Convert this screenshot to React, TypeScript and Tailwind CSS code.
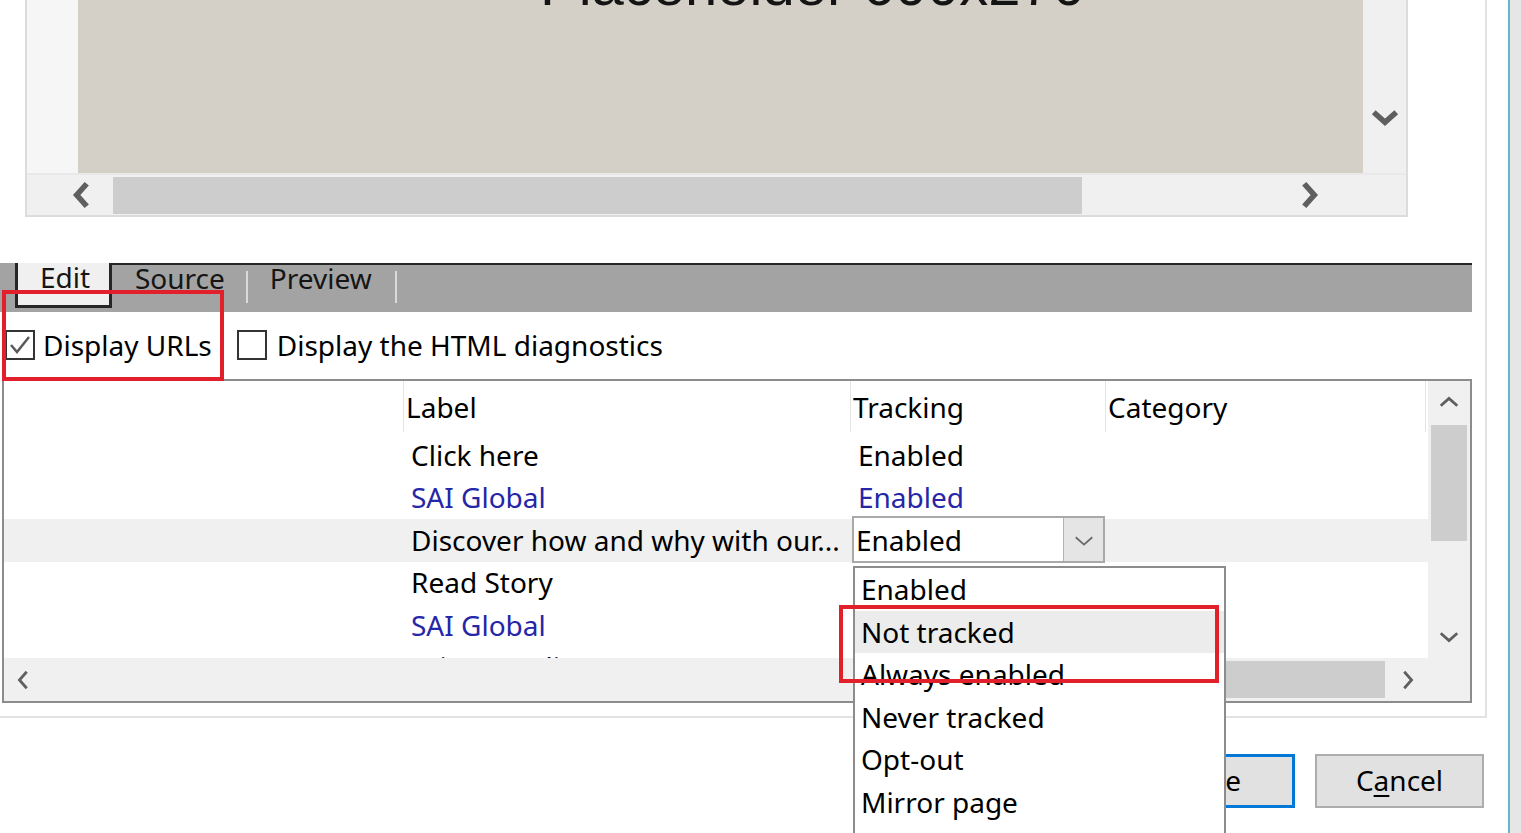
import React from "react";

type Dir = "left" | "right" | "up" | "down";

const chevronPoints: Record<Dir, string> = {
  left: "15,3 7,12 15,21",
  right: "9,3 17,12 9,21",
  up: "3,15 12,7 21,15",
  down: "3,9 12,17 21,9",
};

function Chevron({ dir, size = 20, stroke = 3, color = "#5f5f5f" }: { dir: Dir; size?: number; stroke?: number; color?: string }) {
  return (
    <svg width={size} height={size} viewBox="0 0 24 24" fill="none" stroke={color} strokeWidth={stroke} strokeLinecap="butt" strokeLinejoin="miter">
      <polyline points={chevronPoints[dir]} />
    </svg>
  );
}

function PreviewPane() {
  return (
    <div className="ml-[25px] flex h-[217px] w-[1383px] flex-col border-x-2 border-b-2 border-[#dcdcdc]">
      <div className="flex h-[173px]">
        <div className="w-[51px] bg-[#f6f6f6]" />
        <div className="w-[1285px] overflow-hidden bg-[#d4d0c8]">
          <div className="-mt-[44px] whitespace-nowrap pl-[462px] font-['Liberation_Sans',Arial,sans-serif] text-[58px] leading-none text-[#141414]">
            Placeholder 600x270
          </div>
        </div>
        <div className="flex flex-1 flex-col items-center justify-end bg-[#f0f0f0] pb-[42px]">
          <Chevron dir="down" size={30} stroke={4.5} />
        </div>
      </div>
      <div className="h-[2px] bg-[#e9e9e9]" />
      <div className="flex flex-1 items-center bg-[#f0f0f0]">
        <div className="flex w-[86px] justify-end pr-[15px]">
          <Chevron dir="left" size={30} stroke={4.5} />
        </div>
        <div className="h-[37px] w-[969px] bg-[#cdcdcd]" />
        <div className="flex w-[281px] justify-end pr-[40px]">
          <Chevron dir="right" size={30} stroke={4.5} />
        </div>
      </div>
    </div>
  );
}

function TabBar() {
  return (
    <div className="flex h-[49px] w-[1472px] bg-[#a3a3a3] text-[#151515]">
      <div className="w-[15px]" />
      <div className="h-[45px] w-[97px] border-x-[3px] border-b-[3px] border-[#262626] bg-[#f0f0f0] pl-[22px] leading-[28px]">
        Edit
      </div>
      <div className="flex flex-1 items-start border-t-2 border-[#262626] leading-[27px]">
        <span className="pl-[23px]">Source</span>
        <div className="ml-[21px] mt-[6px] h-[32px] w-[2px] bg-[#dadada]" />
        <span className="ml-[22px]">Preview</span>
        <div className="ml-[23px] mt-[6px] h-[32px] w-[2px] bg-[#dadada]" />
      </div>
    </div>
  );
}

function Checkbox({ checked }: { checked?: boolean }) {
  return (
    <div className="flex h-[30px] w-[30px] items-center justify-center border-2 border-[#333333] bg-white">
      {checked && (
        <svg width="24" height="24" viewBox="0 0 24 24" fill="none" stroke="#5a5a5a" strokeWidth="2.5">
          <polyline points="3,12 9,19 21,4" />
        </svg>
      )}
    </div>
  );
}

function Options() {
  return (
    <div className="flex h-[67px] items-center pb-[2px] pl-[5px]">
      <Checkbox checked />
      <span className="ml-[8px]">Display URLs</span>
      <div className="ml-[25px]">
        <Checkbox />
      </div>
      <span className="ml-[10px]">Display the HTML diagnostics</span>
    </div>
  );
}

const rows = [
  { label: "Click here", tracking: "Enabled", link: false },
  { label: "SAI Global", tracking: "Enabled", link: true },
  { label: "Discover how and why with our...", tracking: "Enabled", link: false, editing: true },
  { label: "Read Story", tracking: "", link: false },
  { label: "SAI Global", tracking: "", link: true },
  { label: "Privacy Policy", tracking: "", link: false },
];

function LinkTable() {
  return (
    <div className="ml-[2px] flex h-[324px] w-[1470px] flex-col border-2 border-[#8c8c8c]">
      <div className="flex h-[277px]">
        <div className="w-[1424px] overflow-hidden">
          <div className="flex h-[53px] items-center pb-[2px]">
            <div className="h-full w-[399px]" />
            <div className="flex h-full w-[447px] items-center border-l border-[#e5e5e5] pl-[2px]">Label</div>
            <div className="flex h-full w-[255px] items-center border-l border-[#e5e5e5] pl-[2px]">Tracking</div>
            <div className="flex h-full w-[320px] items-center border-l border-[#e5e5e5] pl-[2px]">Category</div>
            <div className="h-full border-l border-[#e5e5e5]" />
          </div>
          {rows.map((r, i) => (
            <div key={i} className={`flex h-[42.5px] items-center pb-[1px] ${r.editing ? "bg-[#f0f0f0]" : ""} ${r.link ? "text-[#2626a6]" : ""}`}>
              <div className="w-[399px]" />
              <div className="w-[447px] whitespace-nowrap pl-[8px]">{r.label}</div>
              <div className="w-[255px]">
                {r.editing ? (
                  <div className="ml-[2px] flex h-[47px] w-[253px] border-2 border-[#a9a9a9] bg-white">
                    <span className="flex flex-1 items-center pl-[2px]">{r.tracking}</span>
                    <div className="flex w-[40px] items-center justify-center border-l border-[#b4b4b4] bg-[#e5e5e5]">
                      <Chevron dir="down" size={22} stroke={2} color="#6a6a6a" />
                    </div>
                  </div>
                ) : (
                  <span className="pl-[8px]">{r.tracking}</span>
                )}
              </div>
            </div>
          ))}
        </div>
        <div className="flex w-[42px] flex-col items-center bg-[#f0f0f0]">
          <div className="flex h-[44px] items-center">
            <Chevron dir="up" size={22} stroke={3} />
          </div>
          <div className="h-[116px] w-[36px] bg-[#cdcdcd]" />
          <div className="mt-[84px]">
            <Chevron dir="down" size={22} stroke={3} />
          </div>
        </div>
      </div>
      <div className="flex flex-1 items-center bg-[#f0f0f0]">
        <div className="flex w-[40px] justify-center">
          <Chevron dir="left" size={22} stroke={3} />
        </div>
        <div className="ml-[856px] h-[37px] w-[485px] bg-[#cdcdcd]" />
        <div className="flex w-[43px] justify-center">
          <Chevron dir="right" size={22} stroke={3} />
        </div>
      </div>
    </div>
  );
}

const options = ["Enabled", "Not tracked", "Always enabled", "Never tracked", "Opt-out", "Mirror page"];

export default function App() {
  return (
    <div className="relative flex h-[833px] w-[1521px] overflow-hidden bg-white font-['Noto_Sans','Open_Sans',sans-serif] text-[28px] text-black">
      <div className="flex w-[1508px] flex-col">
        <div className="flex h-[718px] w-[1487px] flex-col border-r-2 border-b-2 border-[#e3e3e3]">
          <PreviewPane />
          <div className="h-[46px]" />
          <TabBar />
          <Options />
          <LinkTable />
        </div>
        <div className="flex justify-end gap-[20px] pr-[24px] pt-[36px]">
          <button className="flex h-[54px] w-[169px] items-center justify-center border-[3px] border-[#0078d7] bg-[#e1e1e1] pb-[2px]">
            Save
          </button>
          <button className="flex h-[54px] w-[169px] items-center justify-center border-2 border-[#adadad] bg-[#e1e1e1] pb-[2px]">
            C<span className="underline underline-offset-4">a</span>ncel
          </button>
        </div>
      </div>
      <div className="w-[2px] bg-[#63b9cc]" />
      <div className="flex-1 bg-[#e6e6e6]" />

      {/* open tracking dropdown */}
      <div className="absolute left-[853px] top-[566px] h-[290px] w-[373px] border-2 border-[#8c8c8c] bg-white">
        {options.map((o, i) => (
          <div key={o} className={`flex h-[42.5px] items-center pl-[6px] ${i === 1 ? "bg-[#ececec]" : ""}`}>
            {o}
          </div>
        ))}
      </div>

      {/* annotation boxes */}
      <div className="absolute left-[2px] top-[290px] h-[91px] w-[222px] border-4 border-[#e2202c]" />
      <div className="absolute left-[839px] top-[605px] h-[78px] w-[380px] border-4 border-[#e2202c]" />
    </div>
  );
}
